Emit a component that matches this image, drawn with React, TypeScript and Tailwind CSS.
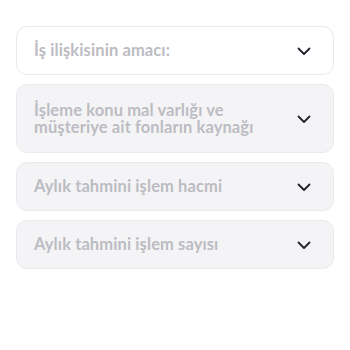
import React from 'react';

const fields = [
  { label: 'İş ilişkisinin amacı:', active: true },
  { label: 'İşleme konu mal varlığı ve müşteriye ait fonların kaynağı', active: false },
  { label: 'Aylık tahmini işlem hacmi', active: false },
  { label: 'Aylık tahmini işlem sayısı', active: false },
];

const Chevron = () => (
  <svg width="16" height="10" viewBox="0 0 16 10" fill="none" className="shrink-0">
    <path d="M2.5 2.5l5.5 5.5 5.5-5.5" stroke="#23232d" strokeWidth="1.8" strokeLinecap="round" strokeLinejoin="round" />
  </svg>
);

const App: React.FC = () => {
  return (
    <div className="w-[350px] h-[350px] bg-white pt-[26px] px-4" style={{ fontFamily: 'Lato, "Noto Sans", sans-serif' }}>
      <div className="flex flex-col gap-[9px]">
        {fields.map((f) => (
          <div
            key={f.label}
            className={`flex items-center justify-between rounded-[11px] border pl-[17px] pr-[21px] ${
              f.active ? 'bg-white border-[#e9e9ec]' : 'bg-[#f4f4f6] border-[#ebebee]'
            } ${f.label.length > 40 ? 'h-[69px]' : 'h-[49px]'}`}
          >
            <span className="text-[16.5px] leading-[17px] font-bold text-[#bcbcc2] pr-6 tracking-[0.1px]">{f.label}</span>
            <Chevron />
          </div>
        ))}
      </div>
    </div>
  );
};

export default App;
